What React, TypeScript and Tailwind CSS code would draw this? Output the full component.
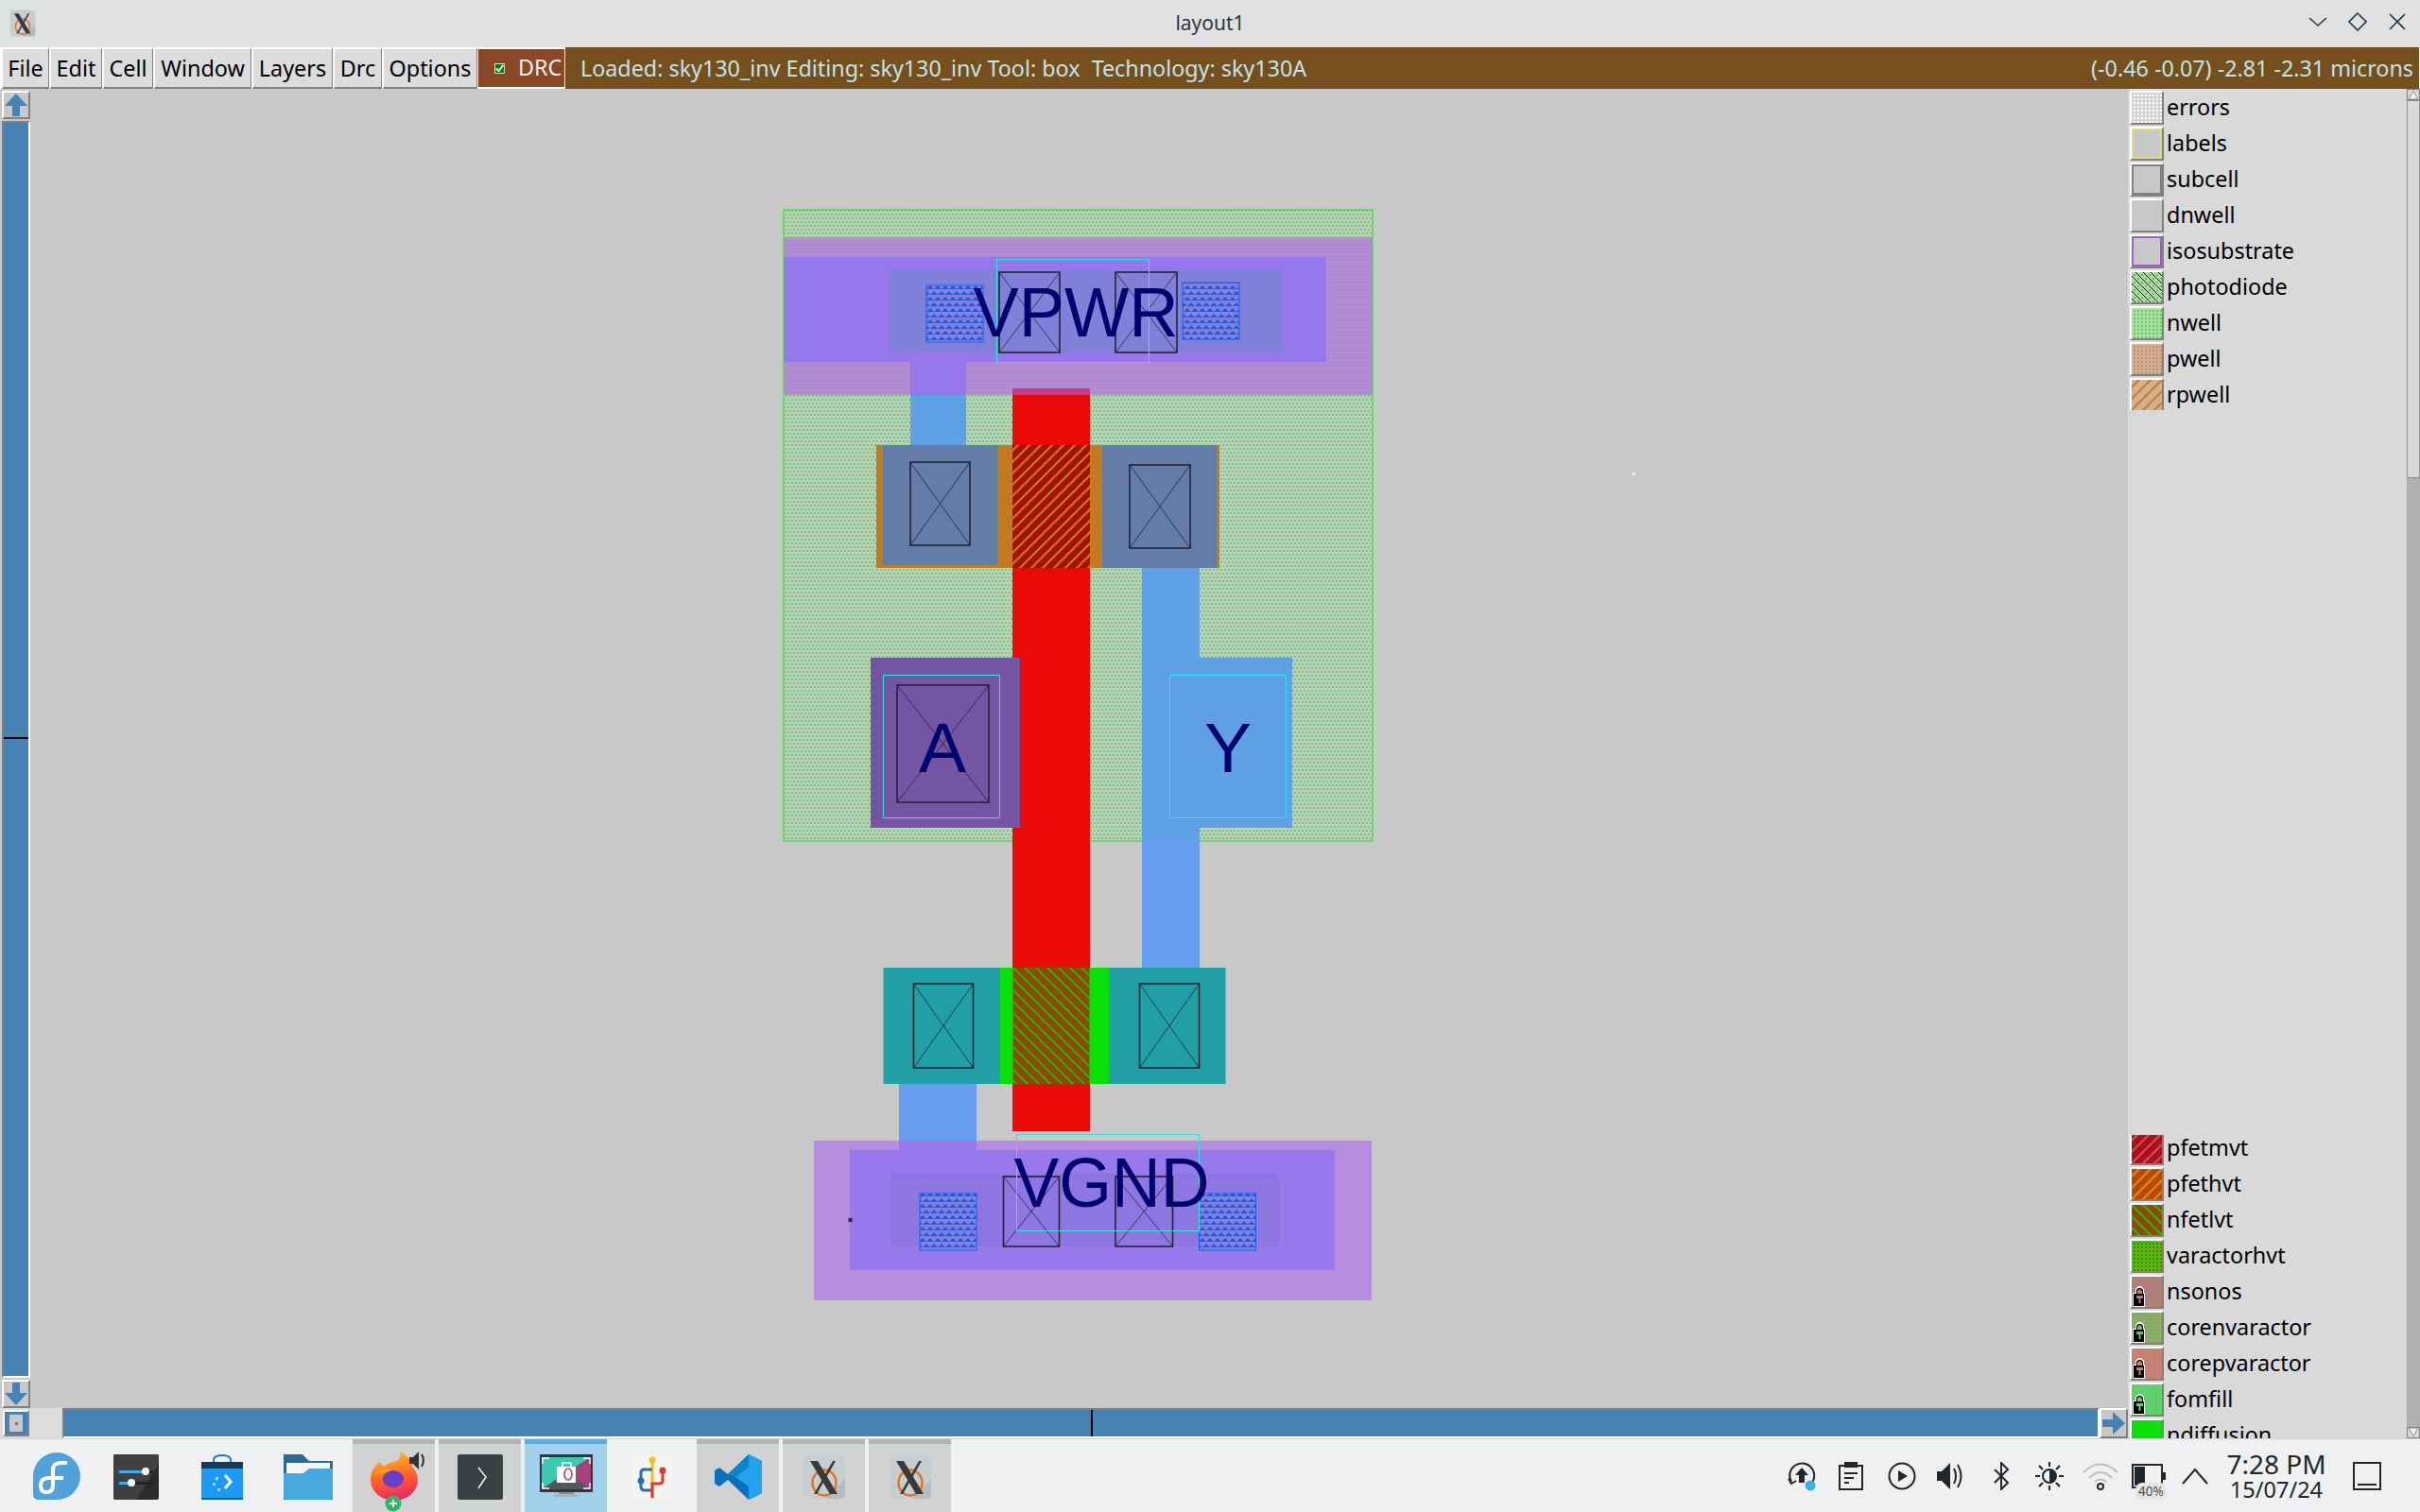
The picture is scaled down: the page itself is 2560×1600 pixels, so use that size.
import type { ReactNode } from 'react';

const menus = [
  { label: 'File', width: 'w-[50px]' },
  { label: 'Edit', width: 'w-[55px]' },
  { label: 'Cell', width: 'w-[53px]' },
  { label: 'Window', width: 'w-[103px]' },
  { label: 'Layers', width: 'w-[85px]' },
  { label: 'Drc', width: 'w-[51px]' },
  { label: 'Options', width: 'w-[100px]' },
];

type Swatch = { name: string; fill: string; overlay?: string; border?: string; locked?: boolean };

const topLayers: Swatch[] = [
  { name: 'errors', fill: '#d4d4d4', overlay: 'url(#sw-white-dots)' },
  { name: 'labels', fill: '#c8c8c8', border: '#e0dc80' },
  { name: 'subcell', fill: '#c8c8c8', border: '#808080' },
  { name: 'dnwell', fill: '#c8c8c8', overlay: 'url(#sw-yellow-hatch)' },
  { name: 'isosubstrate', fill: '#c8c8c8', border: '#a060c0' },
  { name: 'photodiode', fill: '#b4d8ac', overlay: 'url(#sw-photo)' },
  { name: 'nwell', fill: '#b0dca8', overlay: 'url(#sw-green-dots)' },
  { name: 'pwell', fill: '#d4b090', overlay: 'url(#sw-brown-dots)' },
  { name: 'rpwell', fill: '#d4b090', overlay: 'url(#sw-orange-hatch)' },
];

const bottomLayers: Swatch[] = [
  { name: 'pfetmvt', fill: '#b00c24', overlay: 'url(#sw-pink-hatch)' },
  { name: 'pfethvt', fill: '#bc4808', overlay: 'url(#sw-amber-hatch)' },
  { name: 'nfetlvt', fill: '#8c4a0c', overlay: 'url(#sw-green-hatch)' },
  { name: 'varactorhvt', fill: '#20d800', overlay: 'url(#sw-red-dots)' },
  { name: 'nsonos', fill: '#b08078', locked: true },
  { name: 'corenvaractor', fill: '#70bc60', overlay: 'url(#sw-pink-dots)', locked: true },
  { name: 'corepvaractor', fill: '#c88070', locked: true },
  { name: 'fomfill', fill: '#60d068', locked: true },
  { name: 'ndiffusion', fill: '#08e008' },
];

const LayerRow = ({ layer }: { layer: Swatch }) => (
  <div className="flex items-center h-[38px] shrink-0 pl-[2px]">
    <svg width="36" height="36" viewBox="0 0 36 36" className="shrink-0">
      <rect width="36" height="36" fill="#808080" />
      <path d="M0 0H36L34 2H2V34L0 36Z" fill="#fff" />
      <rect x="2" y="2" width="32" height="32" fill={layer.fill} />
      {layer.overlay && <rect x="2" y="2" width="32" height="32" fill={layer.overlay} />}
      {layer.border && <rect x="3" y="3" width="30" height="30" fill="none" stroke={layer.border} strokeWidth="2" />}
      {layer.locked && (
        <g>
          <path d="M3 34V19H6V15L9 12H12L15 15V19H16V34Z" fill="#fff" />
          <path d="M4 33V20H15V33Z" fill="#000" />
          <path d="M7 20V16L9 14H12L14 16V20Z" fill="#000" />
          <path d="M8 20V17L10 15H11L13 17V20Z" fill={layer.fill} />
          <rect x="7" y="22" width="7" height="3" fill={layer.fill} />
          <rect x="9.5" y="25" width="2" height="5" fill={layer.fill} />
        </g>
      )}
    </svg>
    <span className="ml-[3px] text-[23.4px] leading-none text-black whitespace-nowrap pb-[1px]">{layer.name}</span>
  </div>
);

// contact cut: box with a cross through it
const Contact = ({ x, y, w, h }: { x: number; y: number; w: number; h: number }) => (
  <g stroke="#222436" fill="none">
    <rect x={x} y={y} width={w} height={h} strokeWidth="1.6" />
    <path d={`M${x} ${y}L${x + w} ${y + h}M${x + w} ${y}L${x} ${y + h}`} strokeWidth="0.8" />
  </g>
);

const Pad = ({ x, y }: { x: number; y: number }) => (
  <g>
    <rect x={x} y={y} width="60" height="60" fill="#8480da" />
    <rect x={x} y={y} width="60" height="60" fill="url(#pad)" stroke="#1060f8" strokeWidth="1" />
  </g>
);

const Label = ({ x, y, w, h }: { x: number; y: number; w: number; h: number }) => (
  <rect x={x} y={y} width={w} height={h} fill="none" stroke="#2ee6e6" strokeWidth="1" />
);

const PinText = ({ x, y, children, width }: { x: number; y: number; children: string; width?: number }) => (
  <text
    x={x}
    y={y}
    textAnchor="middle"
    fill="#00006e"
    fontSize="75"
    textLength={width}
    lengthAdjust={width ? 'spacingAndGlyphs' : undefined}
    className="font-['Liberation_Sans',sans-serif]"
  >
    {children}
  </text>
);

const LayoutCanvas = () => (
  <svg viewBox="33 94 2218 1396" className="block w-full h-full bg-[#c8c8c8]">
    <defs>
      <pattern id="nwell" width="4" height="8" patternUnits="userSpaceOnUse" x="829" y="222">
        <rect x="0" y="0" width="2" height="2" fill="#50e050" />
        <rect x="2" y="4" width="2" height="2" fill="#50e050" />
      </pattern>
      <pattern id="bandDots" width="4" height="8" patternUnits="userSpaceOnUse" x="829" y="222">
        <rect x="0" y="0" width="2" height="2" fill="#a48dbc" />
        <rect x="2" y="4" width="2" height="2" fill="#a48dbc" />
      </pattern>
      <pattern id="blueDots" width="4" height="8" patternUnits="userSpaceOnUse" x="829" y="222">
        <rect x="0" y="0" width="2" height="2" fill="#58a2d8" />
        <rect x="2" y="4" width="2" height="2" fill="#58a2d8" />
      </pattern>
      <pattern id="vgndDots" width="4" height="8" patternUnits="userSpaceOnUse" x="942" y="1242">
        <rect x="0" y="0" width="2" height="2" fill="#8f78e6" />
        <rect x="2" y="4" width="2" height="2" fill="#8f78e6" />
      </pattern>
      <pattern id="pad" width="8" height="12" patternUnits="userSpaceOnUse" x="980" y="302">
        <path d="M4 0L8 4H0ZM0 6L4 10H-4ZM8 6L12 10H4Z" fill="#1060f8" />
      </pattern>
      <pattern id="pHatch" width="12" height="12" patternUnits="userSpaceOnUse">
        <path d="M-3 3L3 -3M0 12L12 0M9 15L15 9" stroke="#cc7c20" strokeWidth="2" />
      </pattern>
      <pattern id="nHatch" width="12" height="12" patternUnits="userSpaceOnUse">
        <path d="M-3 9L3 15M0 0L12 12M9 -3L15 3" stroke="#10c800" strokeWidth="1.8" />
      </pattern>
      <pattern id="sw-white-dots" width="4" height="4" patternUnits="userSpaceOnUse"><rect width="2" height="2" fill="#fff" /></pattern>
      <pattern id="sw-green-dots" width="4" height="4" patternUnits="userSpaceOnUse"><rect width="2" height="2" fill="#50d850" /></pattern>
      <pattern id="sw-brown-dots" width="4" height="4" patternUnits="userSpaceOnUse"><rect width="2" height="2" fill="#c09070" /></pattern>
      <pattern id="sw-red-dots" width="4" height="4" patternUnits="userSpaceOnUse"><rect width="2" height="2" fill="#f02808" /></pattern>
      <pattern id="sw-pink-dots" width="4" height="4" patternUnits="userSpaceOnUse"><rect width="2" height="2" fill="#d87878" /></pattern>
      <pattern id="sw-yellow-hatch" width="12" height="12" patternUnits="userSpaceOnUse"><path d="M0 0L12 12" stroke="#dcdc60" strokeWidth="1" /></pattern>
      <pattern id="sw-photo" width="8" height="8" patternUnits="userSpaceOnUse">
        <rect width="2" height="2" fill="#40d840" />
        <rect x="4" y="4" width="2" height="2" fill="#40d840" />
        <path d="M0 -4L12 8M-4 0L8 12" stroke="#101010" strokeWidth="1" />
      </pattern>
      <pattern id="sw-orange-hatch" width="12" height="12" patternUnits="userSpaceOnUse"><path d="M-3 3L3 -3M0 12L12 0M9 15L15 9" stroke="#d07c20" strokeWidth="2.2" /></pattern>
      <pattern id="sw-pink-hatch" width="12" height="12" patternUnits="userSpaceOnUse"><path d="M-3 3L3 -3M0 12L12 0M9 15L15 9" stroke="#c85a40" strokeWidth="2" /></pattern>
      <pattern id="sw-amber-hatch" width="12" height="12" patternUnits="userSpaceOnUse"><path d="M-3 3L3 -3M0 12L12 0M9 15L15 9" stroke="#dc8c20" strokeWidth="2" /></pattern>
      <pattern id="sw-green-hatch" width="12" height="12" patternUnits="userSpaceOnUse"><path d="M-3 9L3 15M0 0L12 12M9 -3L15 3" stroke="#10c800" strokeWidth="2" /></pattern>
    </defs>

    {/* nwell */}
    <rect x="829" y="222" width="623" height="668" fill="#c8c8c8" />
    <rect x="829" y="222" width="623" height="668" fill="url(#nwell)" stroke="#50e050" strokeWidth="1.5" />

    {/* VPWR rail */}
    <rect x="829" y="251" width="623" height="167" fill="#b68cd8" />
    <rect x="829" y="251" width="623" height="167" fill="url(#bandDots)" />
    <rect x="829" y="272" width="574" height="111" fill="#9778ec" />
    <rect x="941" y="286" width="416" height="87" fill="#8080d8" />
    <Pad x={980} y={302} />
    <Pad x={1251} y={299} />

    {/* drain/source straps */}
    <rect x="963" y="383" width="59" height="35" fill="#9778ec" />
    <rect x="963" y="418" width="59" height="53" fill="#5fa0e8" />
    <rect x="963" y="418" width="59" height="53" fill="url(#blueDots)" />
    <rect x="1208" y="601" width="61" height="423" fill="#689cee" />
    <rect x="1208" y="601" width="61" height="289" fill="#5fa0e8" />
    <rect x="1208" y="601" width="61" height="289" fill="url(#blueDots)" />

    {/* poly */}
    <rect x="1071" y="411" width="82" height="786" fill="#ea0a08" />
    <rect x="1071" y="411" width="82" height="7" fill="#c83c90" />

    {/* pmos */}
    <rect x="927" y="471" width="363" height="130" fill="#c47a20" />
    <rect x="934" y="471" width="121" height="127" fill="#647ca8" />
    <rect x="1166" y="471" width="121" height="130" fill="#647ca8" />
    <rect x="1071" y="471" width="82" height="130" fill="#a81000" />
    <rect x="1071" y="471" width="82" height="130" fill="url(#pHatch)" />
    <Contact x={963} y={489} w={63} h={88} />
    <Contact x={1195} y={492} w={64} h={88} />

    {/* A / Y pins */}
    <rect x="921" y="696" width="158" height="180" fill="#7355a3" />
    <Label x={934.5} y={714.5} w={123} h={151} />
    <Contact x={949} y={725} w={97} h={124} />
    <PinText x={997} y={817}>A</PinText>
    <rect x="1268" y="696" width="99" height="180" fill="#5fa0e8" />
    <rect x="1268" y="696" width="99" height="180" fill="url(#blueDots)" />
    <Label x={1237.5} y={714.5} w={123} h={151} />
    <PinText x={1299} y={817}>Y</PinText>

    {/* nmos */}
    <rect x="951" y="1147" width="82" height="70" fill="#689cee" />
    <rect x="934.5" y="1024" width="362" height="123" fill="#20a0a4" />
    <rect x="1057.5" y="1024" width="115.5" height="123" fill="#08e008" />
    <rect x="1071.5" y="1024" width="81" height="123" fill="#8a4a08" />
    <rect x="1071.5" y="1024" width="81" height="123" fill="url(#nHatch)" />
    <Contact x={966.5} y={1041} w={63} h={89} />
    <Contact x={1205.5} y={1041} w={63} h={89} />

    {/* VGND rail */}
    <rect x="861" y="1207" width="590" height="169" fill="#b68ce0" />
    <rect x="951" y="1207" width="82" height="10" fill="#9779ec" />
    <rect x="899" y="1217" width="513" height="127" fill="#9779ec" />
    <rect x="942" y="1242" width="411" height="77" fill="#8e76e0" />
    <rect x="942" y="1242" width="411" height="77" fill="url(#vgndDots)" />
    <Pad x={973} y={1263} />
    <Pad x={1268.5} y={1263} />
    <Contact x={1061.5} y={1245} w={59} h={74} />
    <Contact x={1180} y={1245} w={60.5} h={74} />
    <rect x="897.5" y="1289" width="4" height="4" fill="#2a2a3a" />

    {/* VPWR / VGND labels go on top */}
    <Contact x={1057} y={288} w={64} h={85} />
    <Contact x={1180} y={288} w={65} h={85} />
    <Label x={1054.5} y={274.5} w={161} h={109} />
    <PinText x={1138} y={356} width={217}>VPWR</PinText>
    <Label x={1075.5} y={1200.5} w={193} h={102} />
    <PinText x={1176} y={1277} width={207}>VGND</PinText>

    <rect x="1727" y="500" width="3" height="3" fill="#f0f0f0" />
  </svg>
);

const ArrowButton = ({ dir, className }: { dir: 'up' | 'down' | 'right'; className: string }) => {
  const rotate = dir === 'up' ? 0 : dir === 'down' ? 180 : 90;
  return (
    <div className={`border-2 border-t-white border-l-white border-b-[#808080] border-r-[#808080] bg-[#c8c8c8] flex items-center justify-center ${className}`}>
      <svg viewBox="0 0 26 26" className="w-[26px] h-[26px]" style={{ transform: `rotate(${rotate}deg)` }}>
        <path d="M13 1L25 14H17V25H9V14H1Z" fill="#4682b4" />
      </svg>
    </div>
  );
};

const WindowButtons = () => (
  <div className="absolute right-[14px] top-[13px] flex gap-[22px]">
    <svg viewBox="0 0 20 20" className="w-[20px] h-[20px]" fill="none" stroke="#31363b" strokeWidth="1.6"><path d="M1 6L10 14L19 6" /></svg>
    <svg viewBox="0 0 20 20" className="w-[20px] h-[20px]" fill="none" stroke="#31363b" strokeWidth="1.6"><path d="M10 1L19 10L10 19L1 10Z" /></svg>
    <svg viewBox="0 0 20 20" className="w-[20px] h-[20px]" fill="none" stroke="#31363b" strokeWidth="1.6"><path d="M2 2L18 18M18 2L2 18" /></svg>
  </div>
);

// the xorg "X" logo, used in the title bar and task bar
const XLogo = ({ className }: { className: string }) => (
  <svg viewBox="0 0 46 48" className={className}>
    <rect x="1" y="1" width="44" height="46" rx="5" fill="#c6ced0" />
    <path d="M24 47L45 26V42Q45 47 40 47Z" fill="#b4bcbe" />
    <ellipse cx="23" cy="30" rx="12.5" ry="13.5" fill="none" stroke="#e8701c" strokeWidth="2.4" />
    <path d="M8 7H16L37 42H29Z" fill="#3a3a3a" />
    <path d="M32 7H35L15 42H12Z" fill="#3a3a3a" />
  </svg>
);

const Fedora = () => (
  <svg viewBox="0 0 50 50" className="w-[50px] h-[50px]">
    <path d="M25 0A25 25 0 0 1 25 50H6Q0 50 0 44V25A25 25 0 0 1 25 0Z" fill="#51a2da" />
    <path d="M36 11H29Q21 11 21 19V35Q21 42 14 42Q8 42 8 35Q8 27 16 27H32" fill="none" stroke="#fff" strokeWidth="4" />
  </svg>
);

const SettingsIcon = () => (
  <svg viewBox="0 0 48 48" className="w-[48px] h-[48px]">
    <rect width="48" height="48" rx="2" fill="#2a2c2e" />
    <path d="M0 2Q0 0 2 0H46Q48 0 48 2V10L24 48H2Q0 48 0 46Z" fill="#3e4042" />
    <rect x="6" y="17" width="36" height="3" fill="#202224" />
    <rect x="6" y="17" width="28" height="3" fill="#3daee9" />
    <circle cx="34" cy="18" r="4" fill="#fff" />
    <rect x="6" y="29" width="36" height="3" fill="#202224" />
    <rect x="6" y="29" width="13" height="3" fill="#3daee9" />
    <circle cx="19" cy="30" r="4" fill="#fff" />
  </svg>
);

const DiscoverIcon = () => (
  <svg viewBox="0 0 44 48" className="w-[44px] h-[48px]">
    <path d="M13 10V6Q13 1 22 1Q31 1 31 6V10" fill="none" stroke="#1c78c8" strokeWidth="2" />
    <rect y="8" width="44" height="40" fill="#1d99f3" />
    <rect y="8" width="44" height="7" fill="#1a3a58" />
    <rect y="46" width="44" height="2" fill="#14609c" />
    <path d="M25 22L31 29L25 36" fill="none" stroke="#fff" strokeWidth="3" />
    <rect x="15" y="24" width="3" height="3" fill="#a4dcf8" />
    <rect x="12" y="30" width="3" height="3" fill="#a4dcf8" />
    <rect x="17" y="36" width="3" height="3" fill="#a4dcf8" />
  </svg>
);

const FolderIcon = () => (
  <svg viewBox="0 0 52 48" className="w-[52px] h-[48px]">
    <path d="M0 0H20L27 7H52V48H0Z" fill="#296d96" />
    <rect x="3" y="9" width="46" height="22" fill="#f5f5f5" />
    <path d="M0 20H21L27 15H52V46Q52 48 50 48H2Q0 48 0 46Z" fill="#46a8dc" />
  </svg>
);

const FirefoxIcon = () => (
  <svg viewBox="0 0 60 64" className="w-[60px] h-[64px] ml-[11px] mt-[10px]">
    <defs>
      <linearGradient id="fx" x1="0.3" y1="0" x2="0.5" y2="1">
        <stop offset="0" stopColor="#ffc02c" />
        <stop offset="0.5" stopColor="#ff6a22" />
        <stop offset="1" stopColor="#e8246c" />
      </linearGradient>
    </defs>
    <path d="M28 10C31 7 32 4 31 0C40 5 45 12 44 16C48 20 50 26 50 30A25 22 0 0 1 0 30C0 22 4 15 10 11C11 13 12 15 14 16C17 13 22 11 28 10Z" fill="url(#fx)" />
    <ellipse cx="24" cy="29" rx="11" ry="9" fill="#6a3dc8" />
    <path d="M4 24Q11 15 22 19Q18 23 10 24Z" fill="#ff9a20" />
    <path d="M41 6H45L51 0V19L45 13H41Z" fill="#303234" />
    <path d="M54 3Q58 9 54 16" fill="none" stroke="#303234" strokeWidth="2" />
    <circle cx="24" cy="55" r="8.5" fill="#2fb56c" />
    <path d="M24 51V59M20 55H28" stroke="#fff" strokeWidth="2" />
  </svg>
);

const TerminalIcon = () => (
  <svg viewBox="0 0 48 48" className="w-[48px] h-[48px]">
    <rect width="48" height="48" rx="2" fill="#3b4043" />
    <path d="M22 14L30 24L22 36" fill="none" stroke="#eceff0" strokeWidth="1.6" />
  </svg>
);

const SpectacleIcon = () => (
  <svg viewBox="0 0 56 48" className="w-[56px] h-[48px]">
    <rect width="56" height="40" fill="#31363b" />
    <path d="M2 3H54L2 37Z" fill="#3dc8b0" />
    <path d="M54 3V37H2Z" fill="#a8417a" />
    <path d="M2 37L28 20L54 37Z" fill="#4a5a5e" />
    <path d="M3 10V4H10M46 4H53V10M3 30V36H10M46 36H53V30" fill="none" stroke="#fff" strokeWidth="1.4" />
    <rect x="18" y="13" width="20" height="17" fill="#fff" />
    <rect x="24" y="9" width="9" height="5" fill="none" stroke="#fff" strokeWidth="1.4" />
    <ellipse cx="30" cy="21" rx="4" ry="6" fill="none" stroke="#b04a6e" strokeWidth="1.6" />
    <rect x="20" y="40" width="16" height="2" fill="#8a8e90" />
    <rect x="15" y="42" width="26" height="3" fill="#b0b4b6" />
  </svg>
);

const GitIcon = () => (
  <svg viewBox="0 0 44 48" className="w-[44px] h-[48px]">
    <rect width="44" height="48" rx="3" fill="#f6f4ee" />
    <path d="M22 5V44" stroke="#f4c020" strokeWidth="3" />
    <path d="M22 16H13Q10 16 10 20V34Q10 38 14 38H22" fill="none" stroke="#2a6cb8" strokeWidth="3" />
    <path d="M33 19V28Q33 31 29 31H22V46" fill="none" stroke="#e03a30" strokeWidth="3" />
    <circle cx="22" cy="6" r="3.5" fill="#f4c020" />
    <circle cx="33" cy="17" r="3.5" fill="#e03a30" />
    <circle cx="10" cy="28" r="3.5" fill="#2a6cb8" />
  </svg>
);

const VscodeIcon = () => (
  <svg viewBox="0 0 50 48" className="w-[50px] h-[48px]">
    <path d="M36 0L50 7V41L36 48L14 27L5 34L0 31V17L5 14L14 21Z" fill="#0a70b8" />
    <path d="M36 0L50 7V41L36 48V34L22 24L36 13Z" fill="#23a3ee" />
    <path d="M36 13L22 24L14 21L36 0Z" fill="#0e83cc" />
  </svg>
);

const taskIcons: { icon: ReactNode; style: string }[] = [
  { icon: <SettingsIcon />, style: '' },
  { icon: <DiscoverIcon />, style: '' },
  { icon: <FolderIcon />, style: '' },
  { icon: <FirefoxIcon />, style: 'task' },
  { icon: <TerminalIcon />, style: 'task' },
  { icon: <SpectacleIcon />, style: 'active' },
  { icon: <GitIcon />, style: '' },
  { icon: <VscodeIcon />, style: 'task' },
  { icon: <XLogo className="w-[46px] h-[48px]" />, style: 'task' },
  { icon: <XLogo className="w-[46px] h-[48px]" />, style: 'task' },
];

const TaskCell = ({ icon, style }: { icon: ReactNode; style: string }) => (
  <div
    className={`w-[87px] h-full flex flex-col ${
      style === 'active' ? 'bg-[#a0d0ec]' : style === 'task' ? 'bg-[#d0d2d4]' : ''
    }`}
  >
    <div className={`h-[5px] ${style === 'active' ? 'bg-[#50b0e8]' : style === 'task' ? 'bg-[#b2b4b6]' : ''}`} />
    <div className="flex-1 min-h-0 flex items-center justify-center pb-[2px]">{icon}</div>
  </div>
);

const Tray = () => (
  <div className="ml-auto flex items-center h-full text-[#232629] pr-[41px]">
    <svg viewBox="0 0 32 32" className="w-[32px] h-[32px]" fill="none" stroke="#232629" strokeWidth="2">
      <path d="M5 22A13 13 0 1 1 26 24" />
      <path d="M2 19L5 24L10 21" />
      <path d="M16 7L23 15H19V23H13V15H9Z" fill="#232629" stroke="none" />
      <circle cx="25" cy="26" r="5.5" fill="#3daee9" stroke="none" />
    </svg>
    <svg viewBox="0 0 26 30" className="w-[26px] h-[30px] ml-[23px]" fill="none" stroke="#232629" strokeWidth="2">
      <rect x="1" y="4" width="24" height="25" />
      <rect x="6" y="0" width="14" height="6" fill="#232629" stroke="none" />
      <path d="M6 12H20M6 17H16M6 22H11" />
    </svg>
    <svg viewBox="0 0 30 30" className="w-[30px] h-[30px] ml-[26px]" fill="none" stroke="#232629" strokeWidth="2">
      <circle cx="15" cy="15" r="13.5" />
      <path d="M11 9L21 15L11 21Z" fill="#232629" stroke="none" />
    </svg>
    <svg viewBox="0 0 30 30" className="w-[30px] h-[30px] ml-[21px]" fill="none" stroke="#232629" strokeWidth="2">
      <path d="M1 10H6L15 1V29L6 20H1Z" fill="#232629" stroke="none" />
      <path d="M19 7Q23 15 19 23M23 3Q30 15 23 27" />
    </svg>
    <svg viewBox="0 0 18 30" className="w-[18px] h-[30px] ml-[30px]" fill="none" stroke="#232629" strokeWidth="2">
      <path d="M2 8L16 22L9 29V1L16 8L2 22" />
    </svg>
    <svg viewBox="0 0 30 30" className="w-[30px] h-[30px] ml-[27px]" fill="none" stroke="#232629" strokeWidth="2">
      <circle cx="15" cy="15" r="7" />
      <path d="M15 8A7 7 0 0 1 15 22Z" fill="#232629" stroke="none" />
      <path d="M15 0V5M15 25V30M0 15H5M25 15H30M4 4L8 8M22 22L26 26M26 4L22 8M8 22L4 26" />
    </svg>
    <svg viewBox="0 0 38 30" className="w-[38px] h-[30px] ml-[20px]" fill="none" strokeWidth="2">
      <path d="M1 11Q19 -6 37 11M7 17Q19 5 31 17" stroke="#bcbec0" />
      <path d="M13 21Q19 16 25 21" stroke="#bcbec0" />
      <circle cx="19" cy="26" r="3" stroke="#232629" />
    </svg>
    <div className="relative w-[36px] h-[26px] ml-[14px]">
      <svg viewBox="0 0 36 26" className="w-[36px] h-[26px]" fill="none" stroke="#232629" strokeWidth="2">
        <rect x="1" y="1" width="31" height="24" />
        <rect x="3" y="3" width="11" height="20" fill="#232629" stroke="none" />
        <rect x="33" y="9" width="3" height="8" fill="#232629" stroke="none" />
      </svg>
      <span className="absolute top-[20px] left-[4px] px-[3px] rounded-[7px] bg-[#e4e5e6] text-[13.5px] leading-[18px] text-[#4d4d4d]">40%</span>
    </div>
    <svg viewBox="0 0 28 18" className="w-[28px] h-[18px] ml-[17px]" fill="none" stroke="#232629" strokeWidth="2"><path d="M1 17L14 2L27 17" /></svg>
    <div className="flex flex-col items-center w-[136px] ml-[4px]">
      <span className="text-[28px] leading-[29px] whitespace-nowrap">7:28 PM</span>
      <span className="text-[23.5px] leading-[25px] whitespace-nowrap">15/07/24</span>
    </div>
    <svg viewBox="0 0 30 30" className="w-[30px] h-[30px] ml-[13px]" fill="none" stroke="#232629" strokeWidth="2">
      <rect x="1" y="1" width="28" height="28" />
      <path d="M5 24H25" />
    </svg>
  </div>
);

export default function App() {
  return (
    <div className="w-[2560px] h-[1600px] flex flex-col overflow-hidden font-['Noto_Sans',sans-serif] bg-[#c8c8c8]">
      {/* title bar */}
      <div className="relative h-[50px] shrink-0 bg-[#dfe1e3] flex items-center justify-center">
        <XLogo className="absolute left-[10px] top-[10px] w-[28px] h-[29px]" />
        <span className="text-[21px] text-[#31363b]">layout1</span>
        <WindowButtons />
      </div>

      {/* menu + status bar */}
      <div className="h-[44px] shrink-0 flex bg-white pl-[2px] gap-[1px]">
        {menus.map((m) => (
          <button
            key={m.label}
            className={`${m.width} h-full pt-[1px] border-y-[2px] border-x-[1px] border-t-white border-l-white border-b-[#808080] border-r-[#808080] bg-[#dcdcdc] text-[23.4px] text-black flex items-center justify-center`}
          >
            {m.label}
          </button>
        ))}
        <div className="w-[91px] h-full border-y-[2px] border-t-white border-b-white bg-[#8a4828] flex items-center">
          <span className="ml-[17px] w-[11px] h-[11px] bg-[#0a7a20] border border-[#d8d8d8] flex items-center justify-center">
            <svg viewBox="0 0 10 10" className="w-[9px] h-[9px]" fill="none" stroke="#fff" strokeWidth="2"><path d="M1 5L4 8L9 1" /></svg>
          </span>
          <span className="ml-[14px] text-[23.4px] text-[#f4f0e8]">DRC</span>
        </div>
        <div className="flex-1 mr-[1px] bg-[#75501e] flex items-center justify-between pt-[1px] pl-[16px] pr-[6px] text-[23.3px] text-[#c5e3e6] whitespace-pre">
          <span>Loaded: sky130_inv Editing: sky130_inv Tool: box  Technology: sky130A</span>
          <span>(-0.46 -0.07) -2.81 -2.31 microns</span>
        </div>
      </div>

      {/* work area */}
      <div className="flex-1 min-h-0 flex">
        <div className="w-[2251px] flex flex-col">
          <div className="flex-1 min-h-0 flex">
            <div className="w-[33px] pl-[2px] pr-[1px] pt-[2px] flex flex-col gap-[2px]">
              <ArrowButton dir="up" className="h-[30px] w-[30px]" />
              <div className="relative flex-1 bg-[#4682b4] border-2 border-t-[#808080] border-l-[#808080] border-b-white border-r-white">
                <div className="absolute left-0 right-0 top-[650px] h-[2px] bg-black" />
              </div>
              <ArrowButton dir="down" className="h-[30px] w-[30px]" />
            </div>
            <div className="flex-1 min-w-0">
              <LayoutCanvas />
            </div>
          </div>
          <div className="h-[32px] shrink-0 flex bg-[#dcdcdc]">
            <div className="w-[33px] pl-[3px] pr-[2px] pt-[2px] pb-[2px]">
              <div className="w-full h-full bg-[#4682b4] border-2 border-t-white border-l-white border-b-[#808080] border-r-[#808080] flex items-center justify-center">
                <div className="w-[14px] h-[18px] bg-[#c8c8c8] flex items-center justify-center">
                  <div className="w-[3px] h-[3px] bg-[#4682b4]" />
                </div>
              </div>
            </div>
            <div className="w-[33px]" />
            <div className="relative flex-1 bg-[#4682b4] border-2 border-t-[#808080] border-l-[#808080] border-b-white border-r-white">
              <div className="absolute top-0 bottom-0 left-[1086px] w-[2px] bg-black" />
            </div>
            <ArrowButton dir="right" className="w-[30px] h-full" />
          </div>
        </div>

        <div className="w-[295px] bg-[#d9d9d9] flex flex-col justify-between overflow-hidden pt-[1px]">
          <div className="h-[339px] overflow-hidden flex flex-col">
            {topLayers.map((layer) => (
              <LayerRow key={layer.name} layer={layer} />
            ))}
          </div>
          <div className="h-[321px] overflow-hidden">
            <div className="-mt-[5px] flex flex-col">
              {bottomLayers.map((layer) => (
                <LayerRow key={layer.name} layer={layer} />
              ))}
            </div>
          </div>
        </div>

        <div className="w-[14px] flex flex-col bg-[#b0b0b0]">
          <div className="h-[12px] bg-[#d9d9d9] border border-[#808080] flex justify-center">
            <svg viewBox="0 0 10 10" className="w-[10px] h-[10px]"><path d="M5 1L10 10H0Z" fill="#f0f0f0" stroke="#909090" /></svg>
          </div>
          <div className="h-[400px] bg-[#d9d9d9] border border-[#909090]" />
          <div className="flex-1" />
          <div className="h-[12px] bg-[#d9d9d9] border border-[#808080] flex justify-center">
            <svg viewBox="0 0 10 10" className="w-[10px] h-[10px]"><path d="M5 9L0 0H10Z" fill="#f0f0f0" stroke="#909090" /></svg>
          </div>
        </div>
      </div>

      {/* task bar */}
      <div className="h-[78px] shrink-0 bg-[#eff0f1] flex border-t border-[#cfd0d1]">
        <div className="w-[100px] flex items-center pl-[35px]">
          <Fedora />
        </div>
        <div className="flex h-full gap-[4px]">
          {taskIcons.map((t, i) => (
            <TaskCell key={i} icon={t.icon} style={t.style} />
          ))}
        </div>
        <Tray />
      </div>
    </div>
  );
}
